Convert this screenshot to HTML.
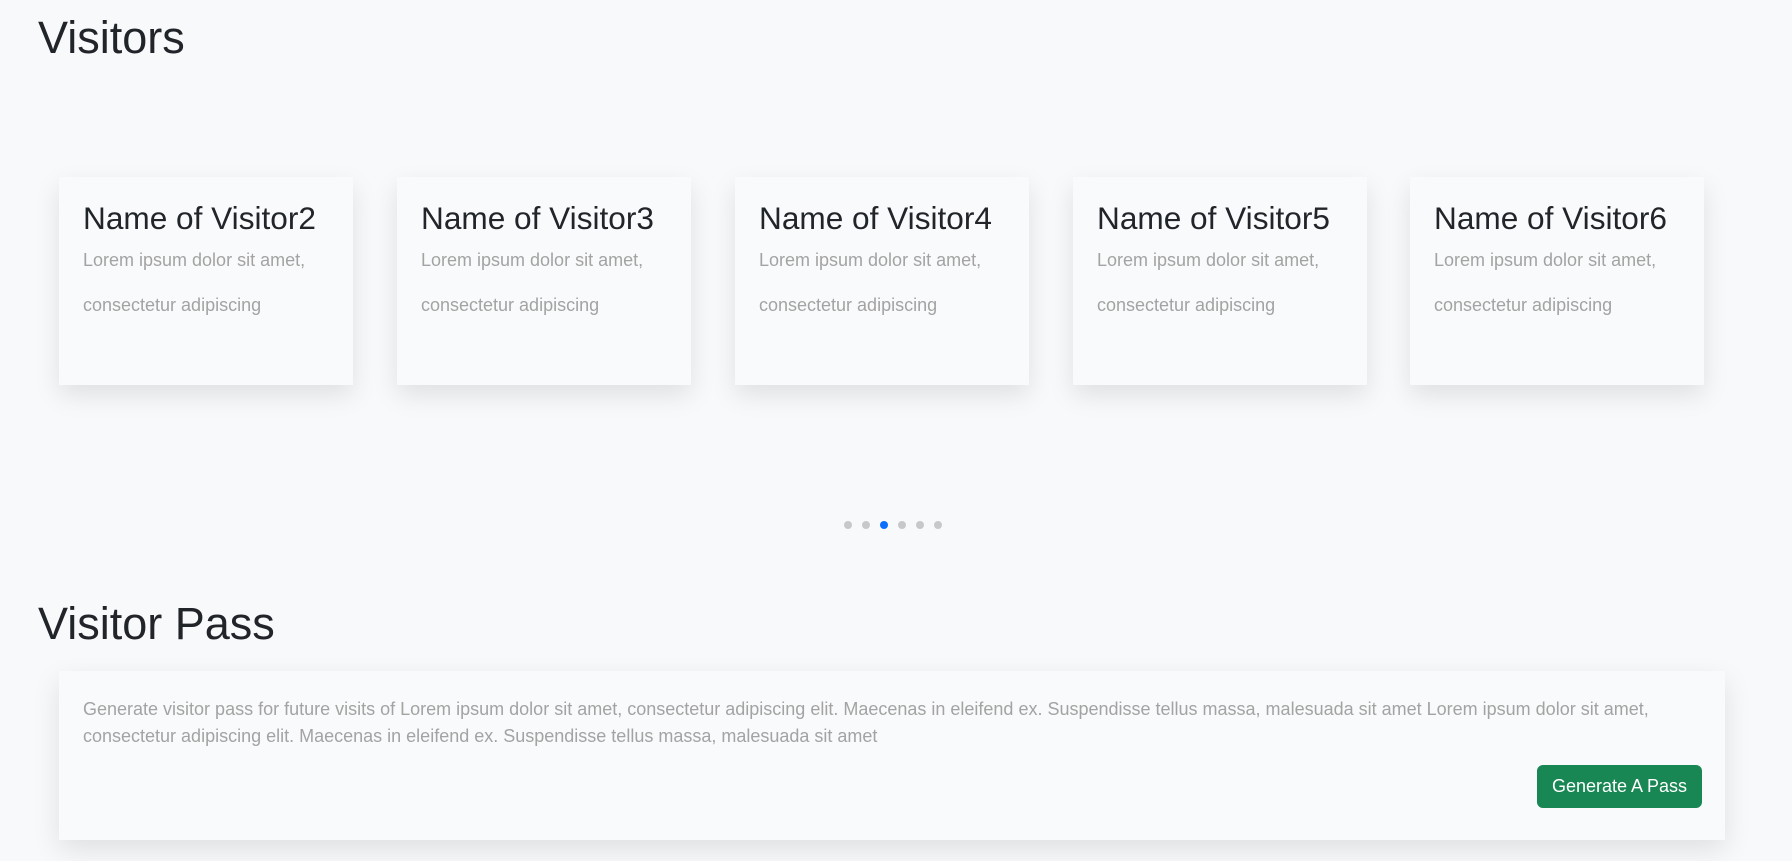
<!DOCTYPE html>
<html><head><meta charset="utf-8"><style>
*{margin:0;padding:0;box-sizing:border-box}
body{width:1792px;height:861px;background:#f8f9fb;font-family:"Liberation Sans",Arial,sans-serif;color:#212529;position:relative;overflow:hidden}
h1{position:absolute;left:38px;font-weight:400;font-size:45px;line-height:1}
.card{position:absolute;top:177px;width:294px;height:208px;background:#f9fafb;box-shadow:0 10px 24px rgba(0,0,0,.10)}
.card h3{position:absolute;left:24px;top:23px;font-weight:400;font-size:31.6px;line-height:1.2;color:#212529;white-space:nowrap}
.card p{position:absolute;left:24px;font-size:18px;color:#a3a3a3;white-space:nowrap}
.dot{position:absolute;top:521px;width:8px;height:8px;border-radius:50%;background:#c6c8ca}
.pass{position:absolute;left:59px;top:671px;width:1666px;height:169px;background:#f9fafb;box-shadow:0 10px 26px rgba(0,0,0,.10)}
.pass p{position:absolute;left:24px;top:25px;width:1620px;font-size:18px;line-height:27px;color:#a3a3a3}
.btn{position:absolute;left:1478px;top:94px;width:165px;height:43px;background:#198754;border-radius:6px;color:#fff;font-size:18px;line-height:43px;text-align:center}
</style></head><body>
<h1 style="top:15px">Visitors</h1>
<div class="card" style="left:59px"><h3>Name of Visitor2</h3><p style="top:73px">Lorem ipsum dolor sit amet,</p><p style="top:118px">consectetur adipiscing</p></div>
<div class="card" style="left:397px"><h3>Name of Visitor3</h3><p style="top:73px">Lorem ipsum dolor sit amet,</p><p style="top:118px">consectetur adipiscing</p></div>
<div class="card" style="left:735px"><h3>Name of Visitor4</h3><p style="top:73px">Lorem ipsum dolor sit amet,</p><p style="top:118px">consectetur adipiscing</p></div>
<div class="card" style="left:1073px"><h3>Name of Visitor5</h3><p style="top:73px">Lorem ipsum dolor sit amet,</p><p style="top:118px">consectetur adipiscing</p></div>
<div class="card" style="left:1410px"><h3>Name of Visitor6</h3><p style="top:73px">Lorem ipsum dolor sit amet,</p><p style="top:118px">consectetur adipiscing</p></div>
<div class="dot" style="left:844px"></div>
<div class="dot" style="left:862px"></div>
<div class="dot" style="left:880px;background:#0d6efd"></div>
<div class="dot" style="left:898px"></div>
<div class="dot" style="left:916px"></div>
<div class="dot" style="left:934px"></div>
<h1 style="top:601px">Visitor Pass</h1>
<div class="pass"><p>Generate visitor pass for future visits of Lorem ipsum dolor sit amet, consectetur adipiscing elit. Maecenas in eleifend ex. Suspendisse tellus massa, malesuada sit amet Lorem ipsum dolor sit amet, consectetur adipiscing elit. Maecenas in eleifend ex. Suspendisse tellus massa, malesuada sit amet</p><div class="btn">Generate A Pass</div></div>
</body></html>
